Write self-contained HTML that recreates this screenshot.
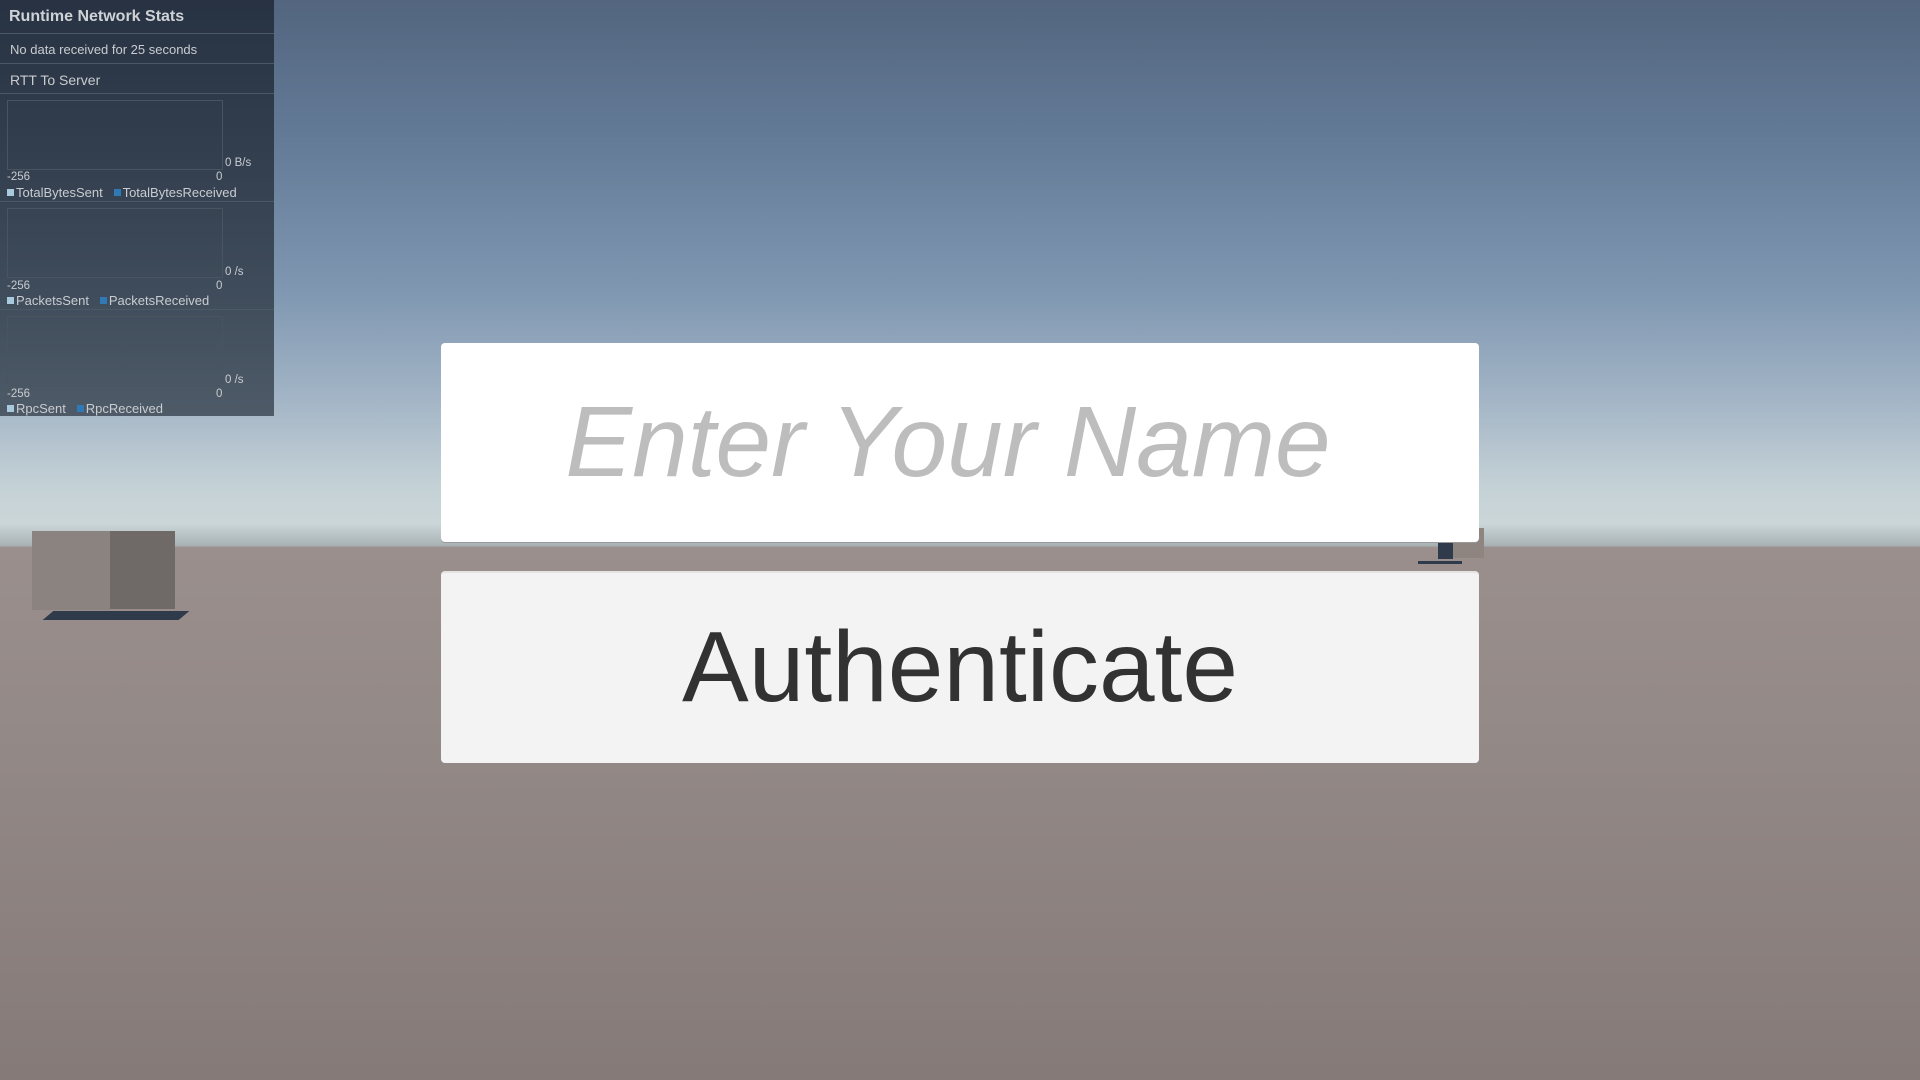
<!DOCTYPE html>
<html><head><meta charset="utf-8"><style>
*{margin:0;padding:0;box-sizing:border-box}
body{width:1920px;height:1080px;overflow:hidden;position:relative;font-family:"Liberation Sans",sans-serif;
background:linear-gradient(to bottom,#53657f 0%,#627995 12%,#7f97b1 27%,#a3b5c6 37%,#c4d1d6 45%,#cbd6d8 48.5%,#a9b3b5 50.5%,#9a8f8c 50.7%,#938987 68%,#857a78 100%)}
.panel{position:absolute;left:0;top:0;width:274px;height:416px;background:linear-gradient(to bottom,rgba(36,46,62,.93),rgba(62,74,86,.85));color:#c9ccd0;font-size:12.5px}
.sep{position:absolute;left:0;width:274px;height:1px;background:#4c5868}
.t{position:absolute;white-space:nowrap}
.box{position:absolute;left:7px;width:216px;height:70px;border:1px solid #4a5360}
.sq{display:inline-block;width:7px;height:7px;margin-right:2px;vertical-align:1px}
.field{position:absolute;left:441px;top:343px;width:1038px;height:199px;background:#fff;border-radius:4px;box-shadow:0 1px 0 #999}
.btn{position:absolute;left:441px;top:571px;width:1038px;height:192px;background:#f3f3f3;border-radius:4px;border-top:2px solid #e3e3e3}
</style></head><body>
<div style="position:absolute;left:32px;top:531px;width:78px;height:79px;background:#8b837f"></div>
<div style="position:absolute;left:110px;top:531px;width:65px;height:78px;background:#6f6a67"></div>
<div style="position:absolute;left:48px;top:611px;width:136px;height:9px;background:#2f3a4a;transform:skewX(-50deg)"></div>
<div style="position:absolute;left:1438px;top:528px;width:46px;height:30px;background:#8e8480"></div>
<div style="position:absolute;left:1438px;top:543px;width:15px;height:16px;background:#2f3a4a"></div>
<div style="position:absolute;left:1418px;top:561px;width:44px;height:3px;background:#2f3a4a"></div>

<div class="panel">
<div class="t" style="left:9px;top:8px;font-size:16px;font-weight:bold;color:#cfd2d6">Runtime Network Stats</div>
<div class="sep" style="top:33px"></div>
<div class="t" style="left:10px;top:42px;font-size:13px">No data received for 25 seconds</div>
<div class="sep" style="top:63px"></div>
<div class="t" style="left:10px;top:72px;font-size:14px">RTT To Server</div>
<div class="sep" style="top:93px"></div>

<div class="box" style="top:100px"></div>
<div class="t" style="left:225px;top:157px;font-size:11.5px">0 B/s</div>
<div class="t" style="left:7px;top:171px;font-size:11.5px">-256</div>
<div class="t" style="left:216px;top:171px;font-size:11.5px">0</div>
<div class="t" style="left:7px;top:185px;font-size:13px"><span class="sq" style="background:#a9c9dc"></span>TotalBytesSent &nbsp;&nbsp;<span class="sq" style="background:#2f79b6"></span>TotalBytesReceived</div>
<div class="sep" style="top:201px"></div>

<div class="box" style="top:208px"></div>
<div class="t" style="left:225px;top:266px;font-size:11.5px">0 /s</div>
<div class="t" style="left:7px;top:280px;font-size:11.5px">-256</div>
<div class="t" style="left:216px;top:280px;font-size:11.5px">0</div>
<div class="t" style="left:7px;top:293px;font-size:13px"><span class="sq" style="background:#a9c9dc"></span>PacketsSent &nbsp;&nbsp;<span class="sq" style="background:#2f79b6"></span>PacketsReceived</div>
<div class="sep" style="top:309px"></div>

<div class="box" style="top:316px"></div>
<div class="t" style="left:225px;top:374px;font-size:11.5px">0 /s</div>
<div class="t" style="left:7px;top:388px;font-size:11.5px">-256</div>
<div class="t" style="left:216px;top:388px;font-size:11.5px">0</div>
<div class="t" style="left:7px;top:401px;font-size:13px"><span class="sq" style="background:#a9c9dc"></span>RpcSent &nbsp;&nbsp;<span class="sq" style="background:#2f79b6"></span>RpcReceived</div>
</div>

<div class="field"><div class="t" style="left:-12px;width:1038px;text-align:center;top:42px;font-size:100px;font-style:italic;color:#bdbdbd;line-height:114px">Enter Your Name</div></div>
<div class="btn"><div class="t" style="left:0;width:1038px;text-align:center;top:34px;font-size:100px;color:#323232;line-height:120px">Authenticate</div></div>
</body></html>
